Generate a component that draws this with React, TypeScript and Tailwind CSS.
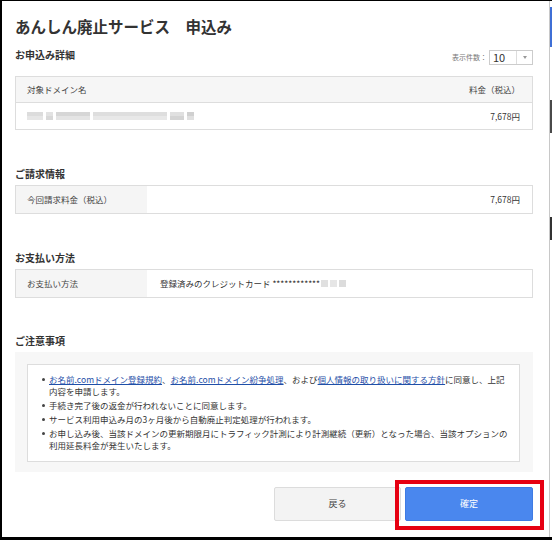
import React from "react";

const font = "font-['Noto_Sans_CJK_JP','Noto_Sans',sans-serif]";

function Mosaic({ segs }: { segs: [number, string, string][] }) {
  return (
    <span className="inline-flex items-center gap-[3px]">
      {segs.map(([w, c1, c2], i) => (
        <span key={i} className="inline-flex flex-col">
          <span className="inline-block h-[4px]" style={{ width: w, background: c1 }} />
          <span className="inline-block h-[4px]" style={{ width: w, background: c2 }} />
        </span>
      ))}
    </span>
  );
}

export default function App() {
  return (
    <div className={`${font} relative w-[552px] h-[540px] flex bg-white border-t border-l-2 border-b-[3px] border-black box-border overflow-hidden text-[#333]`}>
      <div className="w-[547px] pl-[13px] pr-[16px] flex flex-col">
        <h1 className="mt-[15px] text-[15.5px] leading-[20px] font-bold text-[#333]">あんしん廃止サービス　申込み</h1>

        <div className="mt-[13px] h-[16px] flex items-start justify-between">
          <h2 className="text-[10px] leading-[12px] font-bold">お申込み詳細</h2>
          <div className="flex items-center mt-[1px]">
            <span className="text-[7px] text-[#777] mr-[2px]">表示件数：</span>
            <div className="flex h-[15px] w-[44px] border border-[#ccc] bg-white">
              <div className="w-[26px] flex items-center pl-[3px] text-[11px] leading-none text-[#333]">10</div>
              <div className="flex-1 border-l border-[#ddd] flex items-center justify-center">
                <span className="block w-0 h-0 border-l-[2px] border-r-[2px] border-t-[3px] border-l-transparent border-r-transparent border-t-[#999]" />
              </div>
            </div>
          </div>
        </div>

        <div className="mt-[11px] border border-[#ddd] text-[8.5px]">
          <div className="h-[26px] bg-[#f6f6f6] border-b border-[#ddd] flex items-center justify-between px-[11px] text-[#444]">
            <span>対象ドメイン名</span>
            <span className="pr-[1px]">料金（税込）</span>
          </div>
          <div className="h-[26px] flex items-center justify-between pl-[11px] pr-[12px]">
            <Mosaic
              segs={[
                [16, "#dcdcdc", "#e6e6e6"],
                [7, "#e2e2e2", "#d8d8d8"],
                [34, "#d6d6d6", "#e4e4e4"],
                [74, "#dedede", "#e8e8e8"],
                [14, "#e0e0e0", "#d4d4d4"],
                [7, "#d0d0d0", "#e0e0e0"],
              ]}
            />
            <span>7,678円</span>
          </div>
        </div>

        <h2 className="mt-[37px] text-[10px] leading-[14px] font-bold">ご請求情報</h2>
        <div className="mt-[4px] h-[29px] border border-[#ddd] flex text-[8.5px]">
          <div className="w-[131px] bg-[#f5f5f5] flex items-center pl-[11px] text-[#444]">今回請求料金（税込）</div>
          <div className="flex-1 flex items-center justify-end pr-[12px]">7,678円</div>
        </div>

        <h2 className="mt-[37px] text-[10px] leading-[14px] font-bold">お支払い方法</h2>
        <div className="mt-[4px] h-[29px] border border-[#ddd] flex text-[8.5px]">
          <div className="w-[131px] bg-[#f5f5f5] flex items-center pl-[11px] text-[#444]">お支払い方法</div>
          <div className="flex-1 flex items-center pl-[13px]">
            <span>登録済みのクレジットカード ************</span>
            <span className="ml-[1px] inline-flex gap-[2px]">
              <span className="inline-block w-[7px] h-[7px] bg-[#e0e0e0]" />
              <span className="inline-block w-[7px] h-[7px] bg-[#e6e6e6]" />
              <span className="inline-block w-[7px] h-[7px] bg-[#dcdcdc]" />
            </span>
          </div>
        </div>

        <h2 className="mt-[36px] text-[10px] leading-[14px] font-bold">ご注意事項</h2>
        <div className="mt-[4px] h-[120px] bg-[#f7f7f7] pt-[12px] pl-[12px] pr-[13px]">
          <div className="h-[98px] bg-white border border-[#ddd] pt-[8px] pl-[14px]">
            <ul className="flex flex-col gap-[2px] text-[8.5px] leading-[12px] text-[#333]">
              <li className="flex">
                <span className="w-[7px] shrink-0 flex pt-[5px]"><span className="w-[3px] h-[3px] rounded-full bg-[#444]" /></span>
                <span className="whitespace-nowrap">
                  <a className="text-[#1f4fa8] underline">お名前.comドメイン登録規約</a>、
                  <a className="text-[#1f4fa8] underline">お名前.comドメイン紛争処理</a>、および
                  <a className="text-[#1f4fa8] underline">個人情報の取り扱いに関する方針</a>に同意し、上記
                  <br />
                  内容を申請します。
                </span>
              </li>
              <li className="flex">
                <span className="w-[7px] shrink-0 flex pt-[5px]"><span className="w-[3px] h-[3px] rounded-full bg-[#444]" /></span>
                <span className="whitespace-nowrap">手続き完了後の返金が行われないことに同意します。</span>
              </li>
              <li className="flex">
                <span className="w-[7px] shrink-0 flex pt-[5px]"><span className="w-[3px] h-[3px] rounded-full bg-[#444]" /></span>
                <span className="whitespace-nowrap">サービス利用申込み月の3ヶ月後から自動廃止判定処理が行われます。</span>
              </li>
              <li className="flex">
                <span className="w-[7px] shrink-0 flex pt-[5px]"><span className="w-[3px] h-[3px] rounded-full bg-[#444]" /></span>
                <span className="whitespace-nowrap">
                  お申し込み後、当該ドメインの更新期限月にトラフィック計測により計測継続（更新）となった場合、当該オプションの
                  <br />
                  利用延長料金が発生いたします。
                </span>
              </li>
            </ul>
          </div>
        </div>

        <div className="mt-[15px] flex justify-end gap-[4px]">
          <button className="w-[127px] h-[34px] bg-[#f3f3f3] border border-[#dcdcdc] rounded-[2px] text-[9px] text-[#444]">戻る</button>
          <div className="relative">
            <button className="w-[128px] h-[34px] bg-[#4a87ee] border border-[#3f7be3] rounded-[2px] text-[9px] text-white">確定</button>
            <div className="absolute -left-[10px] -right-[11px] -top-[7px] -bottom-[9px] border-[4px] border-[#e60012]" />
          </div>
        </div>
      </div>
      <div className="w-px bg-[#c8c8c8]" />
      <div className="w-[2px] flex flex-col">
        <div className="h-[6px] bg-white" />
        <div className="h-[40px] bg-[#3f6fd6]" />
        <div className="h-[53px] bg-white" />
        <div className="h-[33px] bg-[#4a4a4a]" />
        <div className="h-[84px] bg-white" />
        <div className="h-[23px] bg-[#333]" />
        <div className="flex-1 bg-white" />
      </div>
    </div>
  );
}
